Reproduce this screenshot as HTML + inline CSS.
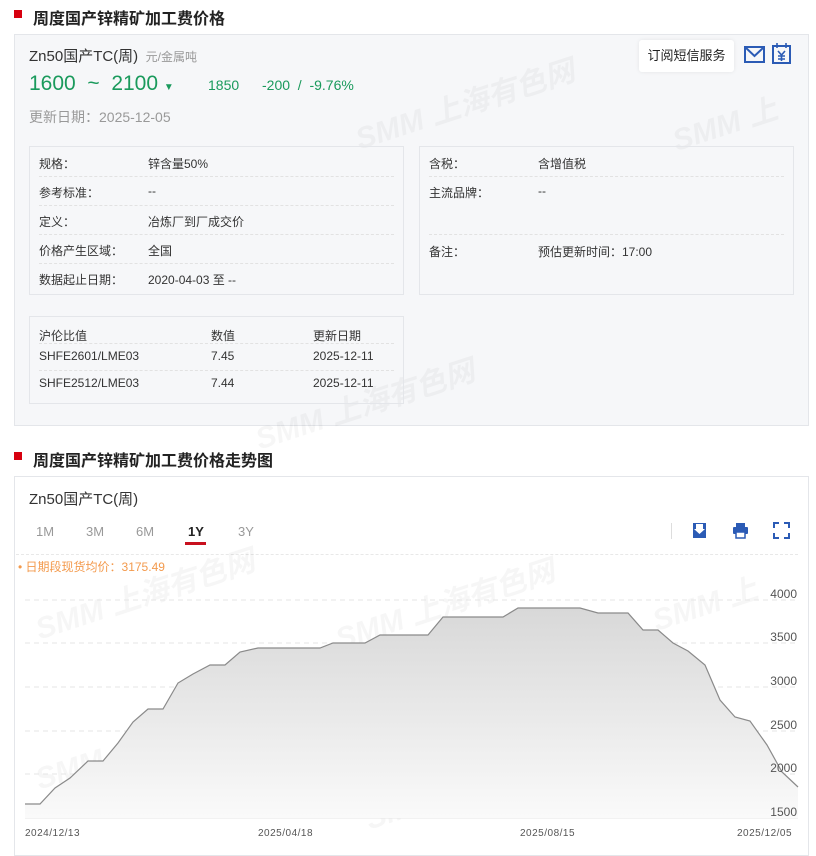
<!DOCTYPE html>
<html><head><meta charset="utf-8"><style>
*{margin:0;padding:0;box-sizing:border-box}
body{width:816px;height:850px;background:#fff;font-family:"Liberation Sans","Noto Sans CJK SC",sans-serif;position:relative;overflow:hidden;color:#333}
.a{position:absolute;white-space:nowrap}
.h{font-size:16px;font-weight:bold;color:#222}
.sq{position:absolute;width:8px;height:8px;background:#d7000f}
.box{position:absolute;border:1px solid #e4e6ea}
.f{font-size:12px;color:#333}
.dl{position:absolute;height:0;border-top:1px dashed #e2e2e2}
.wm{position:absolute;font-size:30px;font-weight:bold;font-style:italic;color:rgba(0,0,0,0.035);transform:rotate(-18deg);white-space:nowrap}
</style></head><body>
<div class="sq" style="left:14px;top:10px"></div>
<div class="a h" style="left:33px;top:5px">周度国产锌精矿加工费价格</div>

<div class="box" style="left:14px;top:34px;width:795px;height:392px;background:#f6f7f9"></div>
<div class="wm" style="left:350px;top:80px">SMM 上海有色网</div>
<div class="wm" style="left:670px;top:100px">SMM 上</div>
<div class="wm" style="left:250px;top:380px">SMM 上海有色网</div>
<div class="a" style="left:29px;top:45px;font-size:15px;color:#333">Zn50国产TC(周) <span style="font-size:12px;color:#999">&nbsp;元/金属吨</span></div>
<div class="a" style="left:29px;top:72px;font-size:21px;color:#1a9a5c">1600 &nbsp;~ &nbsp;2100 <span style="font-size:10px">&#9660;</span></div>
<div class="a" style="left:208px;top:77px;font-size:14px;color:#1a9a5c">1850</div>
<div class="a" style="left:262px;top:77px;font-size:14px;color:#1a9a5c">-200 &nbsp;/ &nbsp;-9.76%</div>
<div class="a" style="left:29px;top:107px;font-size:14px;color:#999">更新日期：2025-12-05</div>
<div class="a" style="left:639px;top:40px;width:95px;height:32px;background:#fff;border-radius:3px;font-size:13px;line-height:32px;text-align:center;color:#222;box-shadow:0 0 4px rgba(0,0,0,0.08)">订阅短信服务</div>
<svg class="a" style="left:743px;top:44px" width="24" height="22"><rect x="2" y="3" width="19" height="15" fill="none" stroke="#2b5bb5" stroke-width="2"/><path d="M2 3 L11.5 12 L21 3" fill="none" stroke="#2b5bb5" stroke-width="2"/></svg>
<svg class="a" style="left:771px;top:42px" width="22" height="24"><rect x="2" y="4" width="17" height="17" fill="none" stroke="#2b5bb5" stroke-width="2"/><path d="M6 1v5M15 1v5M7 9l3.5 4 3.5-4M10.5 13v6M7 14h7M7 17h7" fill="none" stroke="#2b5bb5" stroke-width="1.6"/></svg>

<div class="box" style="left:29px;top:146px;width:375px;height:149px"></div>
<div class="box" style="left:419px;top:146px;width:375px;height:149px"></div>
<div class="a f" style="left:39px;top:155px">规格：</div><div class="a f" style="left:148px;top:155px">锌含量50%</div>
<div class="dl" style="left:39px;top:176px;width:355px"></div>
<div class="a f" style="left:39px;top:184px">参考标准：</div><div class="a f" style="left:148px;top:184px">--</div>
<div class="dl" style="left:39px;top:205px;width:355px"></div>
<div class="a f" style="left:39px;top:213px">定义：</div><div class="a f" style="left:148px;top:213px">冶炼厂到厂成交价</div>
<div class="dl" style="left:39px;top:234px;width:355px"></div>
<div class="a f" style="left:39px;top:242px">价格产生区域：</div><div class="a f" style="left:148px;top:242px">全国</div>
<div class="dl" style="left:39px;top:263px;width:355px"></div>
<div class="a f" style="left:39px;top:271px">数据起止日期：</div><div class="a f" style="left:148px;top:271px">2020-04-03 至 --</div>
<div class="a f" style="left:429px;top:155px">含税：</div><div class="a f" style="left:538px;top:155px">含增值税</div>
<div class="dl" style="left:429px;top:176px;width:355px"></div>
<div class="a f" style="left:429px;top:184px">主流品牌：</div><div class="a f" style="left:538px;top:184px">--</div>
<div class="dl" style="left:429px;top:234px;width:355px"></div>
<div class="a f" style="left:429px;top:243px">备注：</div><div class="a f" style="left:538px;top:243px">预估更新时间：17:00</div>

<div class="box" style="left:29px;top:316px;width:375px;height:88px"></div>
<div class="a f" style="left:39px;top:327px">沪伦比值</div><div class="a f" style="left:211px;top:327px">数值</div><div class="a f" style="left:313px;top:327px">更新日期</div>
<div class="dl" style="left:39px;top:343px;width:355px"></div>
<div class="a f" style="left:39px;top:349px">SHFE2601/LME03</div><div class="a f" style="left:211px;top:349px">7.45</div><div class="a f" style="left:313px;top:349px">2025-12-11</div>
<div class="dl" style="left:39px;top:370px;width:355px"></div>
<div class="a f" style="left:39px;top:376px">SHFE2512/LME03</div><div class="a f" style="left:211px;top:376px">7.44</div><div class="a f" style="left:313px;top:376px">2025-12-11</div>

<div class="sq" style="left:14px;top:452px"></div>
<div class="a h" style="left:33px;top:447px">周度国产锌精矿加工费价格走势图</div>
<div class="box" style="left:14px;top:476px;width:795px;height:380px"></div>
<div class="a" style="left:29px;top:488px;font-size:15px;color:#333">Zn50国产TC(周)</div>
<div class="a" style="left:36px;top:524px;font-size:13px;color:#999">1M</div>
<div class="a" style="left:86px;top:524px;font-size:13px;color:#999">3M</div>
<div class="a" style="left:136px;top:524px;font-size:13px;color:#999">6M</div>
<div class="a" style="left:188px;top:524px;font-size:13px;color:#222;font-weight:bold">1Y</div>
<div class="a" style="left:185px;top:542px;width:21px;height:3px;background:#c8101e"></div>
<div class="a" style="left:238px;top:524px;font-size:13px;color:#999">3Y</div>
<div class="a" style="left:671px;top:523px;width:1px;height:16px;background:#ddd"></div>
<svg class="a" style="left:692px;top:522px" width="16" height="17"><rect x="1" y="1" width="13" height="15" fill="#2b5bb5"/><path d="M4 2h7v5h2l-5.5 5L2 7h2z" fill="#fff"/></svg>
<svg class="a" style="left:732px;top:522px" width="17" height="17"><rect x="4" y="1" width="9" height="4" fill="#2b5bb5"/><rect x="1" y="5" width="15" height="7" rx="1" fill="#2b5bb5"/><rect x="4" y="10" width="9" height="6" fill="#fff" stroke="#2b5bb5" stroke-width="1.5"/></svg>
<svg class="a" style="left:773px;top:522px" width="17" height="17"><path d="M1 6V1h5M11 1h5v5M16 11v5h-5M6 16H1v-5" fill="none" stroke="#2b5bb5" stroke-width="2"/></svg>
<div class="dl" style="left:16px;top:554px;width:782px;border-color:#e8e8e8"></div>
<div class="a" style="left:18px;top:558px;font-size:12px;color:#f39a4d">• 日期段现货均价：3175.49</div>

<div class="wm" style="left:30px;top:570px">SMM 上海有色网</div>
<div class="wm" style="left:330px;top:580px">SMM 上海有色网</div>
<div class="wm" style="left:650px;top:580px">SMM 上</div>
<div class="wm" style="left:30px;top:720px">SMM 上海有色网</div>
<div class="wm" style="left:360px;top:760px">SMM 上海有色网</div>

<svg class="a" style="left:0;top:580px" width="816" height="270">
<defs><linearGradient id="g" x1="0" y1="0" x2="0" y2="1"><stop offset="0" stop-color="#d8d8d8"/><stop offset="1" stop-color="#fafafa"/></linearGradient></defs>
<g stroke="#e6e6e6" stroke-dasharray="5,4"><line x1="25" x2="798" y1="20" y2="20"/><line x1="25" x2="798" y1="63" y2="63"/><line x1="25" x2="798" y1="107" y2="107"/><line x1="25" x2="798" y1="151" y2="151"/><line x1="25" x2="798" y1="194" y2="194"/></g>
<line x1="25" x2="798" y1="238" y2="238" stroke="#e4e4e4"/>
<path d="M25 224 L40 224 L55 208 L70 198 L88 181 L103 181 L118 163 L133 142 L148 129 L163 129 L178 103 L193 94 L210 85 L225 85 L240 72 L258 68 L320 68 L333 63 L365 63 L380 55 L428 55 L443 37 L503 37 L518 28 L580 28 L598 33 L628 33 L643 50 L658 50 L673 63 L688 71 L705 85 L720 120 L735 137 L750 141 L767 165 L782 192 L798 207 L798 238 L25 238Z" fill="url(#g)"/>
<path d="M25 224 L40 224 L55 208 L70 198 L88 181 L103 181 L118 163 L133 142 L148 129 L163 129 L178 103 L193 94 L210 85 L225 85 L240 72 L258 68 L320 68 L333 63 L365 63 L380 55 L428 55 L443 37 L503 37 L518 28 L580 28 L598 33 L628 33 L643 50 L658 50 L673 63 L688 71 L705 85 L720 120 L735 137 L750 141 L767 165 L782 192 L798 207" fill="none" stroke="#8a8a8a" stroke-width="1.2"/>
<g font-size="12" fill="#555" text-anchor="end" font-family="Liberation Sans"><text x="797" y="18">4000</text><text x="797" y="61">3500</text><text x="797" y="105">3000</text><text x="797" y="149">2500</text><text x="797" y="192">2000</text><text x="797" y="236">1500</text></g>
<g font-size="10" fill="#555" font-family="Liberation Sans" letter-spacing="0.5"><text x="25" y="256">2024/12/13</text><text x="258" y="256">2025/04/18</text><text x="520" y="256">2025/08/15</text><text x="737" y="256">2025/12/05</text></g>
</svg>
</body></html>
